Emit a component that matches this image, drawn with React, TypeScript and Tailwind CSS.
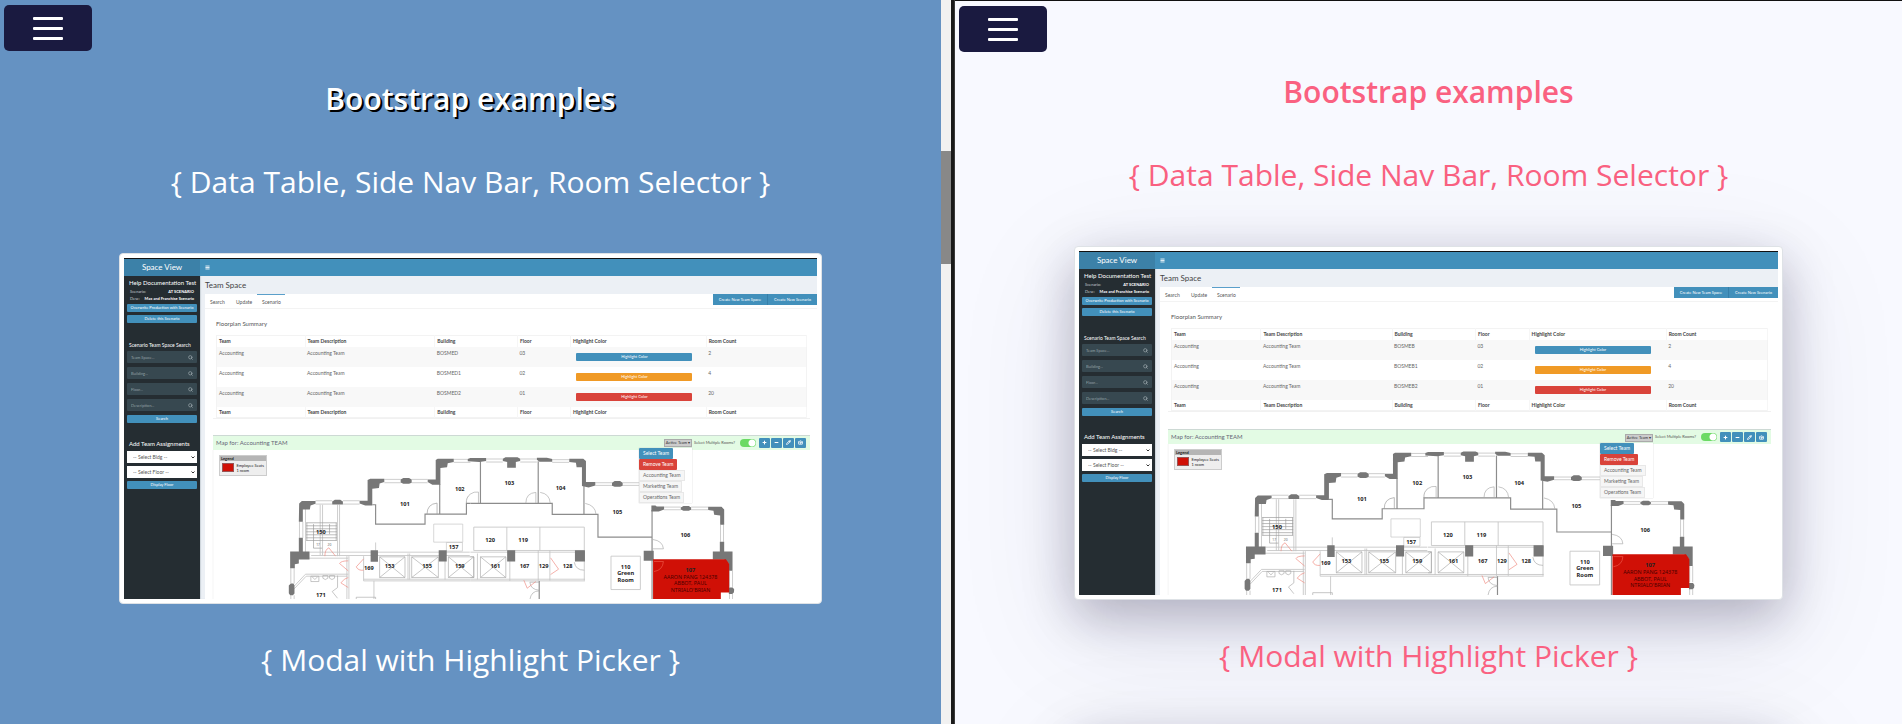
import { useId } from "react";
import { Camera, Menu, Minus, Pencil, Plus, Search } from "lucide-react";

type Row = { building: string; floor: string; color: string; count: string };

const leftRows: Row[] = [
  { building: "BOSMED", floor: "03", color: "bg-[#4290bb]", count: "2" },
  { building: "BOSMED1", floor: "02", color: "bg-[#f09a26]", count: "4" },
  { building: "BOSMED2", floor: "01", color: "bg-[#d9433a]", count: "20" },
];

const rightRows: Row[] = [
  { building: "BOSMEB", floor: "03", color: "bg-[#4290bb]", count: "2" },
  { building: "BOSMEB1", floor: "02", color: "bg-[#f09a26]", count: "4" },
  { building: "BOSMEB2", floor: "01", color: "bg-[#d9433a]", count: "20" },
];

const headings = ["Team", "Team Description", "Building", "Floor", "Highlight Color", "Room Count"];

function Label({ x, y, children }: { x: number; y: number; children: string }) {
  return (
    <text x={x} y={y + 6} textAnchor="middle" fontSize="17" fontWeight="700" fill="#222">
      {children}
    </text>
  );
}

function Elevator({ x, width }: { x: number; width: number }) {
  return (
    <path
      d={`M${x} 390h${width}v62h${-width}zM${x} 390l${width} 62M${x + width} 390l${-width} 62`}
      stroke="#aaa"
      strokeWidth="2"
      fill="none"
    />
  );
}

function FloorPlan() {
  return (
    <svg
      viewBox="285 70 1833 449"
      className="block w-full font-['Noto_Sans',sans-serif]"
      role="img"
      aria-label="Floor plan"
    >
      <path d="M309 70V519" stroke="#eee" strokeWidth="2" />
      <g fill="none" stroke="#c4c4c4" strokeWidth="2.5">
        <path d="M616 222h50M616 232h50M698 222h50M698 232h50M822 158h49M822 168h49M904 158h48M904 168h48M1030 98h50M1030 107h50" />
        <path d="M568 285v48M578 285v48M542 424v46M552 424v46M542 505v14M552 505v14M586 245v142M630 234v152M637 234v152M682 234v154M688 234v154" />
        <path d="M598 376h480M603 386h475M760 457h320M760 462h320M760 388v74M716 388v131M710 388v131M791 462v57M796 347v25" />
        <path d="M893 380v78M898 380v78M1004 380v78M556 394h158M552 478l34-36h128M552 486l36-38h124" />
      </g>
      <g fill="none" stroke="#8c8c8c" strokeWidth="3.5">
        <path d="M786 234h10v58h148v-30h124v-32h12M988 172v90" />
      </g>
      <g fill="none" stroke="#999" strokeWidth="2">
        <path d="M588 288h92M588 297h92M588 306h92M588 315h92M588 324h92M588 333h92M588 341h92M590 288v53M678 288v53M610 292v72M658 292v30M610 364h26" />
        <path d="M970 292h87v54h-87zM1008 347h48v26h-48z" stroke="#c4c4c4" />
        <path d="M950 262q0-30 30-33v33M1068 230q-2-18 12-28" />
        <path d="M602 448h24v16h-24zM606 450l8 8 8-8M638 446h15v8q-8 8-15 0zM658 446h15v8q-8 8-15 0zM682 446v36l-16 12 16 20M738 519v-8h58v8" stroke="#aaa" />
      </g>
      <g fill="none" stroke="#f08a80" strokeWidth="2">
        <path d="M644 388q0-20 12-25l20 25M714 402q-22 0-26 8l26 22M714 452q-12 2-22 16l22 14M760 396l-22 24q6 12 22 10" />
      </g>
      <g fill="#777">
        <path d="M567 230l8-7h41v8l-15 5-2 12h-21v37h-12zM666 224l8-5h16l8 5v9h-32zM748 222h24v-62l8-4h42v10l-14 4-2 14-20 2v50h-21l-17-6z" />
        <path d="M871 158l8-4h17l8 4v10l-8 3h-17l-8-4zM952 158h24v-58l6-4h48v10l-18 4-2 12-20 2v50h-24l-14-8z" />
        <path d="M566 333h12v41h20v24h-32v12l-12 2v12h-14v-50h26zM536 476l6-6h8l3 6v24l-5 5h-8l-4-6zM781 370h22v35h-22zM985 370h24v34h-24z" />
      </g>
      <Elevator x={808} width={76} />
      <Elevator x={904} width={80} />
      <Elevator x={1014} width={76} />
      <Label x={884} y={232}>101</Label>
      <Label x={1048} y={186}>102</Label>
      <Label x={632} y={316}>150</Label>
      <Label x={1030} y={361}>157</Label>
      <Label x={776} y={424}>169</Label>
      <Label x={838} y={416}>153</Label>
      <Label x={950} y={416}>155</Label>
      <Label x={1048} y={418}>159</Label>
      <Label x={632} y={504}>171</Label>
      <text x="618" y="359" fontSize="10" fill="#666">17</text>
      <text x="652" y="359" fontSize="10" fill="#666">20</text>

      <g transform="translate(1080 0)">
        <g fill="none" stroke="#c4c4c4" strokeWidth="2.5">
          <path d="M47 97h50M47 106h50M149 97h50M149 106h50M245 99h51M245 107h51M374 168h50M374 176h50M456 168h86M456 176h86M580 241h50M580 249h50M661 241h51M661 249h51M749 294v51M758 294v51M776 432v48M785 432v48M776 500v19M785 500v19" />
          <path d="M10 301h331v70h-331zM109 301v70M208 301v70M0 376h343M0 457h343M0 462h343M21 380v78M118 376v86M203 371v90M238 371v90M341 371v90M421 388h88v100h-88z" />
        </g>
        <g fill="none" stroke="#8c8c8c" strokeWidth="3.5">
          <path d="M0 230h245v33h137v68h162M30 104v126M203 104v126M340 178v84M544 250v269M206 462v57" />
        </g>
        <g fill="none" stroke="#aaa" strokeWidth="2">
          <path d="M0 202q10-8 24-6v33M166 229q0-30 30-32v32M209 197q28 4 30 32M344 230q30 6 32 32M546 338q30 4 32 28h-32M341 430q-26 0-30-24M206 466h-28q2 22 28 24M206 492q-24 0-28 26" />
          <path d="M240 393l24 34-24 16M160 460l10 24 26-20" stroke="#f08a80" />
        </g>
        <g fill="#777">
          <path d="M-8 97l8-3h47v9l-20 3-35-2zM97 96l8-4h36l8 4v7l-13 3v17h-26v-17l-13-3zM199 93h30l16 4v8h-38l-8-6zM296 96h42l8 7v63h28v10l-20 6-20-4v-56h-16l-2-14-20-2zM424 168l8-5h16l8 5v9l-8 3h-16l-8-3z" />
          <path d="M542 236h12l4 3h22v9l-16 6h-22zM630 242l8-4h16l7 4v7l-7 3h-16l-8-4zM712 240h40l8 8v46h-12v-28l-18-2-2-12-16-2zM747 345h13v29h25v58h-11v-22l-14-12h-34v-24h21zM774 482h12l4 6-1 9-5 4h-10z" />
          <path d="M110 370h24v34h-24zM313 370h30v34h-30zM519 372h30v30h-30z" />
        </g>
        <path d="M547 397h218l10 14v86h-25v22H547z" fill="#d01006" />
        <path d="M550 404h28q-2 26-28 30" fill="none" stroke="#ee5a4a" strokeWidth="2" />
        <Elevator x={30} width={76} />
        <path d="M0 390h10v62h-10" fill="none" stroke="#aaa" strokeWidth="2" />
        <Label x={117} y={168}>103</Label>
        <Label x={270} y={185}>104</Label>
        <Label x={440} y={255}>105</Label>
        <Label x={644} y={324}>106</Label>
        <Label x={59} y={340}>120</Label>
        <Label x={158} y={340}>119</Label>
        <Label x={75} y={416}>161</Label>
        <Label x={162} y={416}>167</Label>
        <Label x={219} y={416}>129</Label>
        <Label x={291} y={416}>128</Label>
        <Label x={465} y={419}>110</Label>
        <Label x={465} y={439}>Green</Label>
        <Label x={465} y={459}>Room</Label>
        <Label x={659} y={430}>107</Label>
        <g textAnchor="middle" fontSize="16" fill="#4a0000">
          <text x="659" y="455">AARON PANG 124378</text>
          <text x="659" y="475">ABBOT, PAUL</text>
          <text x="659" y="495">NTRIALO&apos;BRIAN</text>
        </g>
      </g>
    </svg>
  );
}

function SideButton({ children }: { children: string }) {
  return (
    <button className="block h-2 w-full rounded-[1px] bg-[#4290bb] text-center text-[4px] leading-[8px] text-white">
      {children}
    </button>
  );
}

function SearchField({ label }: { label: string }) {
  return (
    <div className="flex h-3 items-center rounded-[1px] bg-[#374850] px-1">
      <input
        aria-label={label}
        placeholder={`${label}...`}
        className="h-full min-w-0 flex-1 bg-transparent text-[4px] text-white outline-none placeholder:text-[#93a0a6]"
      />
      <Search className="size-[5px] text-[#a5b0b5]" strokeWidth={3} />
    </div>
  );
}

function SideSelect({ label }: { label: string }) {
  return (
    <div className="relative">
      <select aria-label={label} className="block h-3 w-full appearance-none bg-white px-[6px] text-[5px] leading-[12px] text-[#555]">
        <option>{`-- ${label} --`}</option>
      </select>
      <svg viewBox="0 0 8 5" className="pointer-events-none absolute top-[5px] right-[2px] w-1" fill="none" stroke="#333" strokeWidth="2">
        <path d="M1 1l3 3 3-3" />
      </svg>
    </div>
  );
}

function Sidebar() {
  return (
    <aside className="w-[76px] shrink-0 bg-[#252d32] text-white">
      <div className="h-[17px] bg-[#3c81a8] text-center text-[8px] leading-[16px]">Space View</div>
      <div className="px-[3px] pt-[3px]">
        <h4 className="pl-[2px] text-[6px] leading-[8px] whitespace-nowrap">Help Documentation Test</h4>
        <dl className="px-[3px] pt-px text-[4px] leading-[7px] whitespace-nowrap text-[#c5ccd0]">
          <div className="flex justify-between">
            <dt>Scenario:</dt>
            <dd className="font-bold text-white">AT SCENARIO</dd>
          </div>
          <div className="flex justify-between">
            <dt>Desc:</dt>
            <dd className="font-bold text-white">Max and Franchise Scenario</dd>
          </div>
        </dl>
        <div className="flex flex-col gap-[3px] pt-[2px]">
          <SideButton>Overwrite Production with Scenario</SideButton>
          <SideButton>Delete this Scenario</SideButton>
        </div>
        <h4 className="pt-[18px] pl-[2px] text-[5px] leading-[8px] whitespace-nowrap">Scenario Team Space Search</h4>
        <div className="flex flex-col gap-1 pt-[2px]">
          <SearchField label="Team Space" />
          <SearchField label="Building" />
          <SearchField label="Floor" />
          <SearchField label="Description" />
          <SideButton>Search</SideButton>
        </div>
        <h4 className="pt-[17px] pl-[2px] text-[6px] leading-[8px] whitespace-nowrap">Add Team Assignments</h4>
        <div className="flex flex-col gap-[3px] pt-[3px]">
          <SideSelect label="Select Bldg" />
          <SideSelect label="Select Floor" />
          <SideButton>Display Floor</SideButton>
        </div>
      </div>
    </aside>
  );
}

function SummaryTable({ rows }: { rows: Row[] }) {
  return (
    <table className="w-full table-fixed border-collapse border border-[#f3f3f3] text-left text-[5px] leading-[6px] text-[#666]">
      <colgroup>
        <col className="w-[15%]" />
        <col className="w-[22%]" />
        <col className="w-[14%]" />
        <col className="w-[9%]" />
        <col className="w-[23%]" />
        <col className="w-[17%]" />
      </colgroup>
      <thead>
        <tr className="h-[11px] text-[#444]">
          {headings.map((h) => (
            <th key={h} className="border-r border-[#f6f6f6] px-[2px] font-bold">{h}</th>
          ))}
        </tr>
      </thead>
      <tbody>
        {rows.map((r) => (
          <tr key={r.floor} className="h-5 align-top odd:bg-[#f8f8f8]">
            <td className="px-[2px] pt-[3px]">Accounting</td>
            <td className="px-[2px] pt-[3px]">Accounting Team</td>
            <td className="px-[2px] pt-[3px]">{r.building}</td>
            <td className="px-[2px] pt-[3px]">{r.floor}</td>
            <td className="px-[6px] pt-[6px]">
              <button className={`block h-2 w-[116px] rounded-[1px] text-center text-[4px] leading-[8px] text-white ${r.color}`}>
                Highlight Color
              </button>
            </td>
            <td className="px-[2px] pt-[3px]">{r.count}</td>
          </tr>
        ))}
      </tbody>
      <tfoot>
        <tr className="h-[11px] text-[#444]">
          {headings.map((h) => (
            <th key={h} className="border-r border-[#f6f6f6] px-[2px] font-bold">{h}</th>
          ))}
        </tr>
      </tfoot>
    </table>
  );
}

function TeamMenu() {
  const plain = "h-[11px] border border-[#e8e8e8] bg-[#f6f6f6] px-[3px] text-[#666]";
  return (
    <div className="absolute top-[10px] left-[-25px] z-10 flex w-[53px] flex-col items-start bg-white text-[5px] leading-[9px] shadow-[0_0_1px_#bbb]">
      <button className="h-[11px] rounded-[1px] bg-[#4290bb] px-1 text-white">Select Team</button>
      <button className="h-[11px] rounded-[1px] bg-[#d9433a] px-1 text-white">Remove Team</button>
      <button className={plain}>Accounting Team</button>
      <button className={plain}>Marketing Team</button>
      <button className={plain}>Operations Team</button>
    </div>
  );
}

function MapToolbar() {
  const id = useId();
  const tool = "flex h-[10px] w-[11px] items-center justify-center rounded-[1px] bg-[#4290bb] text-white";
  return (
    <div className="relative mr-[7px] ml-2 flex h-[15px] items-center justify-between border-t border-[#cdd9d4] bg-[#e3fbe4] pr-1 pl-[3px]">
      <h5 className="text-[6px] text-[#667]">Map for: Accounting TEAM</h5>
      <div className="flex items-center gap-px text-[5px] leading-[8px] text-[#555]">
        <div className="relative mr-px">
          <button className="h-2 w-7 border border-[#aaa] bg-[#ccc] text-[4px] leading-[6px] whitespace-nowrap text-[#333]">Active Team ▾</button>
          <TeamMenu />
        </div>
        <label htmlFor={id} className="w-[45px] text-[4px] whitespace-nowrap">Select Multiple Rooms?</label>
        <input
          id={id}
          type="checkbox"
          defaultChecked
          className="mr-[2px] h-2 w-4 appearance-none rounded-full bg-[radial-gradient(circle_at_12px_4px,#fff_3px,#6bda64_4px)]"
        />
        <button aria-label="Zoom in" className={tool}><Plus className="size-[5px]" strokeWidth={5} /></button>
        <button aria-label="Zoom out" className={tool}><Minus className="size-[5px]" strokeWidth={5} /></button>
        <button aria-label="Edit" className={tool}><Pencil className="size-[5px]" strokeWidth={4} /></button>
        <button aria-label="Capture" className={tool}><Camera className="size-[5px]" strokeWidth={4} /></button>
      </div>
    </div>
  );
}

function Legend() {
  return (
    <div className="absolute top-[5px] left-[14px] w-12 border border-[#ccc] bg-[#eee] text-[4px] text-[#222]">
      <div className="h-[5px] bg-[#b5b5b5] pl-px leading-[5px] font-bold">Legend</div>
      <div className="flex gap-[2px] p-[2px] whitespace-nowrap">
        <span className="h-[9px] w-[15px] border border-[#955] bg-[#d01006]" />
        <div className="leading-[5px]">
          <p>Employee Seats</p>
          <p>1 room</p>
        </div>
      </div>
    </div>
  );
}

function SpaceView({ rows }: { rows: Row[] }) {
  return (
    <div className="aspect-[692/341] overflow-hidden border-t border-[#111] bg-white font-['Lato','Open_Sans',sans-serif]">
      <div className="flex h-full">
        <Sidebar />
        <main className="flex min-w-0 flex-1 flex-col bg-[#ecf0f5] shadow-[inset_1px_0_1px_#ccd3da]">
          <div className="flex h-[17px] shrink-0 items-center bg-[#4290bb] pl-[5px]">
            <Menu className="size-[5px] text-white" strokeWidth={4} />
          </div>
          <h3 className="h-[18px] shrink-0 pl-[5px] text-[8px] leading-[19px] text-[#444]">Team Space</h3>
          <div className="ml-[5px] flex flex-1 flex-col bg-white">
            <div className="flex h-[15px] items-start justify-between border-b border-[#f3f3f3]">
              <nav className="flex text-[5px] leading-[16px] text-[#555]">
                <a href="#search" className="w-[25px] pl-[5px]">Search</a>
                <a href="#update" className="w-[27px] pl-[6px]">Update</a>
                <a href="#scenario" className="w-7 border-t border-[#5a9fca] pl-[5px] leading-[14px]">Scenario</a>
              </nav>
              <div className="flex text-[4px] leading-[11px] text-white">
                <button className="h-[11px] border-r border-[#367fa9] bg-[#4290bb] px-[6px]">Create New Team Space</button>
                <button className="h-[11px] bg-[#4290bb] px-[6px]">Create New Scenario</button>
              </div>
            </div>
            <div className="mr-[7px] ml-2 h-[110px] border-b border-[#f1f1f1] px-[3px] pt-[11px]">
              <h4 className="h-[15px] text-[6px] leading-[8px] text-[#555]">Floorplan Summary</h4>
              <SummaryTable rows={rows} />
            </div>
            <div className="mt-auto">
              <MapToolbar />
              <div className="relative">
                <FloorPlan />
                <Legend />
              </div>
            </div>
          </div>
        </main>
      </div>
    </div>
  );
}

function MenuButton() {
  return (
    <button aria-label="Open menu" className="flex h-[46px] w-[88px] shrink-0 flex-col items-center justify-center gap-[7px] rounded-[5px] bg-[#1a1a40]">
      <span className="h-[3px] w-[30px] rounded-[1px] bg-white" />
      <span className="h-[3px] w-[30px] rounded-[1px] bg-white" />
      <span className="h-[3px] w-[30px] rounded-[1px] bg-white" />
    </button>
  );
}

function Pane({ rows, tone, headingTone, spacing, card }: {
  rows: Row[];
  tone: string;
  headingTone: string;
  spacing: string;
  card: string;
}) {
  const cardBase = "shrink-0 rounded border border-[#dee2e6] bg-white p-1";
  return (
    <section className={`flex min-w-0 flex-col overflow-hidden font-['Open_Sans','Noto_Sans',sans-serif] text-[30px] leading-[40px] ${tone}`}>
      <div className="flex pt-[5px] pl-[4px]">
        <MenuButton />
      </div>
      <h1 className={`text-center font-semibold ${spacing} ${headingTone}`}>Bootstrap examples</h1>
      <div className="flex flex-col px-[119px] pt-[43px]">
        <h2 className="text-center">{"{ Data Table, Side Nav Bar, Room Selector }"}</h2>
        <div className={`mt-[51px] ${cardBase} ${card}`}>
          <SpaceView rows={rows} />
        </div>
        <h2 className="relative mt-[36px] text-center">{"{ Modal with Highlight Picker }"}</h2>
        <div className={`mt-[51px] h-[350px] ${cardBase} ${card}`} />
      </div>
    </section>
  );
}

export default function App() {
  return (
    <div className="grid h-screen grid-cols-[minmax(0,941fr)_10px_4px_minmax(0,947fr)] grid-rows-[minmax(0,1fr)] overflow-hidden">
      <Pane
        rows={leftRows}
        tone="bg-[#6592c2] text-white"
        headingTone="[text-shadow:2px_2px_#000]"
        spacing="mt-[28px]"
        card=""
      />
      <div className="bg-[#f1f1f1] pt-[151px]">
        <div className="h-[113px] bg-[#888]" />
      </div>
      <div className="border-r border-[#3a3a3a] bg-[#1a1a1a]" />
      <Pane
        rows={rightRows}
        tone="border-t border-[#111] bg-[#f8f9ff] text-[#fa6181]"
        headingTone=""
        spacing="mt-[20px]"
        card="shadow-[0_30px_120px_10px_rgba(17,12,80,0.08),0_16px_50px_rgba(17,12,46,0.27)]"
      />
    </div>
  );
}
